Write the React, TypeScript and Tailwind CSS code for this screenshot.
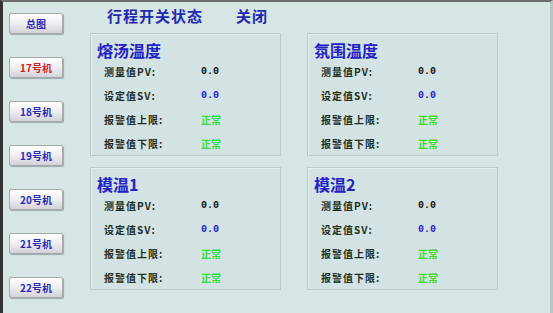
import React from 'react';

const machines = [
  { name: '总图', active: false },
  { name: '17号机', active: true },
  { name: '18号机', active: false },
  { name: '19号机', active: false },
  { name: '20号机', active: false },
  { name: '21号机', active: false },
  { name: '22号机', active: false },
];

const panels = ['熔汤温度', '氛围温度', '模温1', '模温2'];

const cjk = { fontFamily: '"Noto Sans CJK SC", "Noto Sans", sans-serif' };

function Panel({ title }: { title: string }) {
  const rows = [
    { label: '测量值PV:', value: '0.0', color: 'text-[#141414]' },
    { label: '设定值SV:', value: '0.0', color: 'text-[#2424d0]' },
    { label: '报警值上限:', value: '正常', color: 'text-[#34dc34]' },
    { label: '报警值下限:', value: '正常', color: 'text-[#34dc34]' },
  ];
  return (
    <div className="h-[123px] border border-[#bccaca] bg-[#d3e3e3] shadow-[inset_1px_1px_0_#e4eeee]">
      <div className="pl-[6px] pt-[6px] h-[26px] text-[16px] leading-[20px] font-semibold text-[#2222c4]">{title}</div>
      <div className="flex flex-col">
        {rows.map((r) => (
          <div key={r.label} className="flex items-center h-[24px] pl-[13px]">
            <span className="w-[97px] text-[10px] leading-[12px] font-bold tracking-[1px] text-[#1e2e1e]">{r.label}</span>
            <span
              className={`text-[10px] leading-[12px] font-bold ${r.color}`}
              style={r.value === '0.0' ? { fontFamily: '"Liberation Mono", monospace' } : undefined}
            >
              {r.value}
            </span>
          </div>
        ))}
      </div>
    </div>
  );
}

export default function App() {
  return (
    <div
      className="w-[553px] h-[313px] flex bg-[#d6e6e5] border-t-2 border-t-[#6e6e6e] border-l-[3px] border-l-[#333333] border-r-[3px] border-r-[#b9c6c6] overflow-hidden"
      style={cjk}
    >
      {/* Machine buttons */}
      <div className="w-[87px] shrink-0 flex flex-col gap-[23px] pl-[6px] pt-[11px]">
        {machines.map((m) => (
          <button
            key={m.name}
            className={`w-[54px] h-[21px] rounded-[2px] border border-[#a8a8a8] bg-gradient-to-b from-[#ffffff] via-[#eeeef2] to-[#d2d2d8] shadow-[1px_1px_1px_#9aa8a8] text-[10px] font-bold leading-none ${
              m.active ? 'text-[#d42020]' : 'text-[#2a2ab8]'
            }`}
          >
            {m.name}
          </button>
        ))}
      </div>

      {/* Main area */}
      <div className="flex-1 flex flex-col">
        <div className="h-[31px] pb-[3px] flex items-center pl-[17px] text-[15px] font-bold text-[#1f2ab0] tracking-[1px]">
          <span>行程开关状态</span>
          <span className="ml-[33px]">关闭</span>
        </div>
        <div className="grid grid-cols-[191px_191px] gap-x-[26px] gap-y-[11px]">
          {panels.map((p) => (
            <Panel key={p} title={p} />
          ))}
        </div>
      </div>
    </div>
  );
}
